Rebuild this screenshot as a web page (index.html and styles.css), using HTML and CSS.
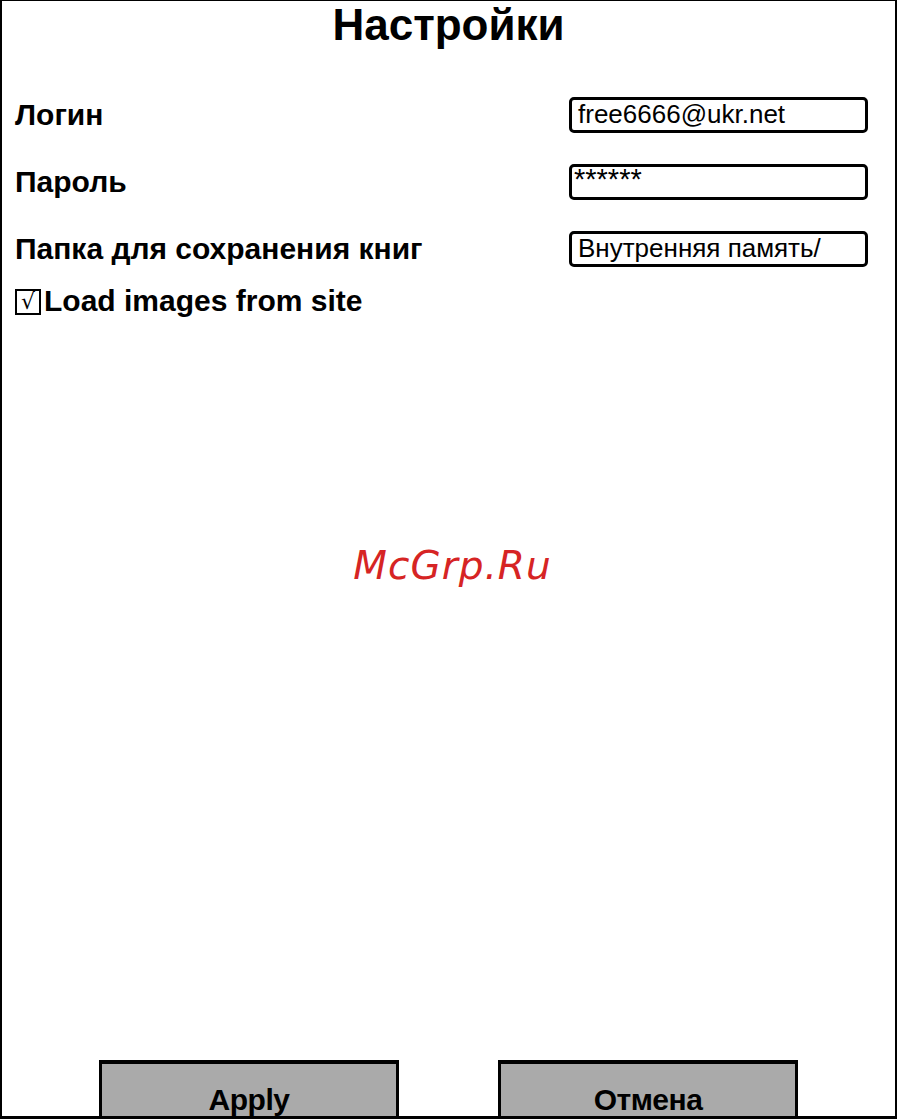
FILE: index.html
```html
<!DOCTYPE html>
<html lang="ru">
<head>
<meta charset="utf-8">
<title>Настройки</title>
<link rel="stylesheet" href="styles.css">
</head>
<body>
<div class="screen">
  <h1 class="title">Настройки</h1>
  <div class="form">
    <div class="row">
      <span class="label">Логин</span>
      <div class="field">free6666@ukr.net</div>
    </div>
    <div class="row">
      <span class="label">Пароль</span>
      <div class="field field-pass">******</div>
    </div>
    <div class="row">
      <span class="label">Папка для сохранения книг</span>
      <div class="field">Внутренняя память/</div>
    </div>
    <div class="check-row">
      <span class="checkbox">√</span><span class="label">Load images from site</span>
    </div>
  </div>
  <div class="watermark">McGrp.Ru</div>
  <div class="buttons">
    <div class="btn">Apply</div>
    <div class="btn">Отмена</div>
  </div>
</div>
</body>
</html>
```

FILE: styles.css
```css
html, body {
  margin: 0;
  padding: 0;
  background: #fff;
}
.screen {
  box-sizing: border-box;
  width: 897px;
  height: 1119px;
  border-top: 1px solid #000;
  border-left: 2px solid #000;
  border-right: 2px solid #000;
  border-bottom: 3px solid #000;
  display: flex;
  flex-direction: column;
  font-family: "Liberation Sans", Arial, sans-serif;
  color: #000;
  overflow: hidden;
}
.title {
  margin: 0;
  height: 52px;
  font-size: 44px;
  line-height: 48px;
  font-weight: bold;
  text-align: center;
  padding-top: 0;
}
.form {
  padding: 28px 27px 0 13px;
  display: flex;
  flex-direction: column;
}
.row {
  display: grid;
  grid-template-columns: 1fr 299px;
  align-items: center;
  height: 67px;
}
.label {
  font-size: 30px;
  font-weight: bold;
  line-height: 34px;
}
.field {
  box-sizing: border-box;
  height: 36px;
  border: 3px solid #000;
  border-radius: 5px;
  font-size: 26px;
  line-height: 28px;
  padding: 0 6px;
  white-space: nowrap;
  overflow: hidden;
}
.field-pass {
  padding-left: 2px;
  font-size: 29px;
  line-height: 24px;
}
.check-row {
  display: flex;
  align-items: center;
  margin-top: 2px;
  height: 34px;
}
.checkbox {
  box-sizing: border-box;
  width: 26px;
  height: 26px;
  border: 2px solid #000;
  font-size: 22px;
  line-height: 22px;
  text-align: center;
  font-family: "DejaVu Sans", sans-serif;
  margin-right: 3px;
  margin-top: 2px;
}
.watermark {
  margin-top: 226px;
  text-align: center;
  font-family: "DejaVu Sans", sans-serif;
  font-style: italic;
  font-size: 39px;
  line-height: 44px;
  color: #d62424;
  letter-spacing: 1px;
  padding-left: 8px;
}
.buttons {
  margin-top: auto;
  display: flex;
  justify-content: center;
  gap: 99px;
}
.btn {
  box-sizing: border-box;
  width: 300px;
  height: 56px;
  background: #aaaaaa;
  border-top: 4px solid #000;
  border-left: 3px solid #000;
  border-right: 3px solid #000;
  font-family: "Liberation Sans Narrow", "Liberation Sans", Arial, sans-serif;
  font-weight: bold;
  font-size: 30px;
  line-height: 34px;
  padding-top: 19px;
  text-align: center;
  letter-spacing: -0.5px;
}
```
